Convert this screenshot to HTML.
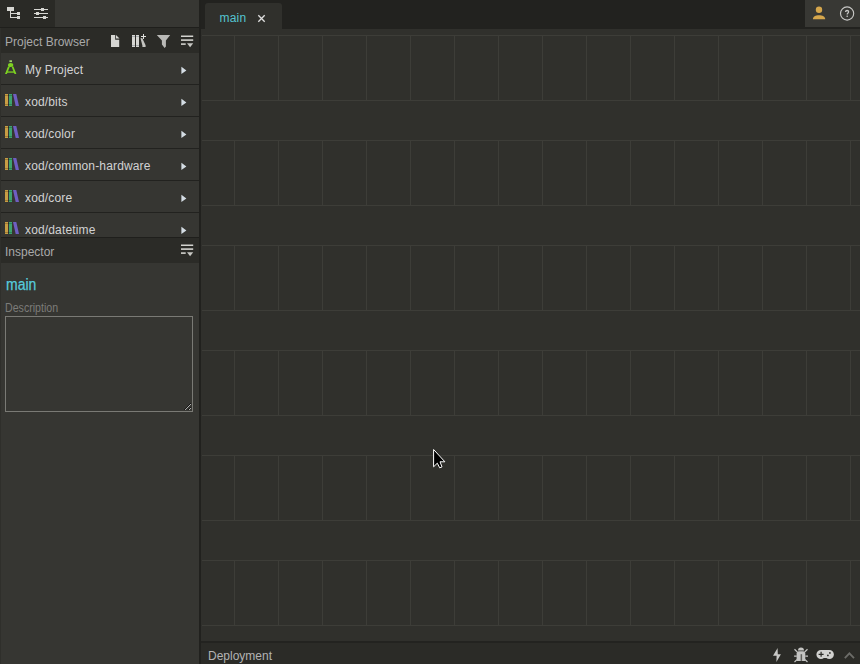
<!DOCTYPE html>
<html><head><meta charset="utf-8">
<style>
*{box-sizing:border-box;margin:0;padding:0}
html,body{width:860px;height:664px;overflow:hidden;background:#31312d;font-family:"Liberation Sans",sans-serif}
.abs{position:absolute}
#side{position:absolute;left:0;top:0;width:199px;height:664px;background:#363632}
#border{position:absolute;left:199px;top:0;width:2px;height:664px;background:#21211e}
#tb{position:absolute;left:0;top:0;width:199px;height:27px;background:#373733}
#tb .btn{position:absolute;top:0;height:27px;background:#2a2a26}
.sep{position:absolute;left:0;width:199px;height:1px;background:#1f1f1c}
.hdr{position:absolute;left:0;width:199px;height:25px;background:#2b2b27;color:#a9a9a9;font-size:12px}
.hdr span{position:absolute;left:5px;top:7px}
.row{position:absolute;left:0;width:199px;height:32px;background:#363632;border-bottom:1px solid #22221f;color:#d2d2d2;font-size:12px}
.row .t{position:absolute;left:25px;top:10px;letter-spacing:0.15px}
.row .arr{position:absolute;left:181px;top:14px;width:0;height:0;border-left:5px solid #d4dde4;border-top:3.5px solid transparent;border-bottom:3.5px solid transparent}
.row svg.lib{position:absolute;left:0;top:0}
#canvas{position:absolute;left:201px;top:29px;width:659px;height:612px;background:#30302c;overflow:hidden}
#topbar{position:absolute;left:201px;top:0;width:659px;height:27px;background:#22221f}
#topsep{position:absolute;left:201px;top:27px;width:659px;height:2px;background:#22221f}
#tab{position:absolute;left:205px;top:3px;width:77px;height:26px;background:#30302c;border-radius:3px 3px 0 0}
#right{position:absolute;left:805px;top:0;width:55px;height:27px;background:#383834}
#bot{position:absolute;left:201px;top:641px;width:659px;height:2px;background:#232320}
#dep{position:absolute;left:201px;top:643px;width:659px;height:21px;background:#2b2b27;color:#b3b3b3;font-size:12px}
.hl{position:absolute;left:1px;width:658px;height:1px;background:#3d3d38}
.vl{position:absolute;width:1px;background:#3d3d38}
.cond{display:inline-block;transform-origin:0 0;white-space:nowrap}
</style></head><body>
<div id="side"></div>
<div id="tb">
  <div class="btn" style="left:0;width:27px"></div>
  <div class="btn" style="left:27px;width:28px"></div>
  <svg class="abs" style="left:0;top:0" width="55" height="27" viewBox="0 0 55 27">
    <g fill="#d6d6d2">
      <rect x="7" y="7" width="7" height="4"/>
      <rect x="10" y="11" width="1" height="7"/>
      <rect x="10" y="13" width="8" height="1"/>
      <rect x="10" y="17" width="8" height="1"/>
      <rect x="17" y="12" width="3" height="3"/>
      <rect x="17" y="16" width="3" height="3"/>
      <rect x="34" y="9" width="14" height="1"/>
      <rect x="34" y="13" width="14" height="1"/>
      <rect x="34" y="17" width="14" height="1"/>
      <rect x="41" y="8" width="3" height="3"/>
      <rect x="36" y="12" width="3" height="3"/>
      <rect x="43" y="16" width="3" height="3"/>
    </g>
  </svg>
</div>
<div class="sep" style="top:27px"></div>
<div class="hdr" style="top:28px"><span>Project Browser</span>
  <svg class="abs" style="left:100px;top:0" width="99" height="25" viewBox="0 -1 99 25">
    <path d="M11 6H15.2V10.8H19.2V18H11Z" fill="#d6d6d2"/>
    <path d="M16 6V9.5H19.5Z" fill="#d6d6d2"/>
    <rect x="32" y="6" width="3" height="12" fill="#d6d6d2"/>
    <rect x="36" y="6" width="3" height="12" fill="#d6d6d2"/>
    <rect x="32" y="7.1" width="3" height="0.6" fill="#8a9098"/>
    <rect x="36" y="7.1" width="3" height="0.6" fill="#8a9098"/>
    <rect x="32" y="16.2" width="3" height="0.6" fill="#8a9098"/>
    <rect x="36" y="16.2" width="3" height="0.6" fill="#8a9098"/>
    <path d="M40.5 9.2L42.2 9L45.6 16.2V18H42.4V16.6Z" fill="#c4c4c0"/>
    <rect x="41" y="7" width="5" height="1" fill="#e0e0dc"/>
    <rect x="43" y="5" width="1" height="5" fill="#e0e0dc"/>
    <path d="M56.8 6H70.2L65.9 11.4V17.5L64.6 19.1L61.9 15.5V11.4Z" fill="#b9b9b6"/>
    <rect x="81" y="6.5" width="12.2" height="1.5" fill="#d2d2ce"/>
    <rect x="81" y="10.3" width="12.2" height="1.6" fill="#d2d2ce"/>
    <rect x="81" y="14.3" width="4.7" height="1.6" fill="#d2d2ce"/>
    <path d="M87 14.2H93.2L90.1 18.2Z" fill="#c8c8c4"/>
  </svg>
</div>
<div class="row" style="top:53px;"><svg class="lib" width="24" height="32" viewBox="0 0 24 32">
    <rect x="9.4" y="7.3" width="2.6" height="1.8" fill="#a0d468"/>
    <ellipse cx="10.7" cy="12" rx="2.7" ry="2.1" fill="#7ed321"/>
    <path d="M8 13.6H9.9L6.9 21H5Z" fill="#7ed321"/>
    <path d="M11.5 13.6H13.4L16.4 21H14.5Z" fill="#7ed321"/>
    <rect x="6.8" y="18.4" width="7.8" height="1.3" fill="#7ed321"/>
  </svg><span class="t">My Project</span><svg class="lib" width="199" height="32" viewBox="0 0 199 32"><path d="M181.4 13.8L186.4 17.4L181.4 21Z" fill="#d4dde4"/></svg></div>
<div class="row" style="top:85px;"><svg class="lib" width="24" height="32" viewBox="0 0 24 32"><rect x="5" y="9" width="3" height="12" fill="#c99d44"/><rect x="9" y="9" width="3" height="12" fill="#3ea36e"/><path d="M13 9H16.3L19 21H15.7Z" fill="#6f5ec2"/><g fill="#000" opacity="0.3"><rect x="5" y="10.3" width="7" height="0.7"/><rect x="5" y="19" width="7" height="0.7"/></g></svg><span class="t">xod/bits</span><svg class="lib" width="199" height="32" viewBox="0 0 199 32"><path d="M181.4 13.8L186.4 17.4L181.4 21Z" fill="#d4dde4"/></svg></div>
<div class="row" style="top:117px;"><svg class="lib" width="24" height="32" viewBox="0 0 24 32"><rect x="5" y="9" width="3" height="12" fill="#c99d44"/><rect x="9" y="9" width="3" height="12" fill="#3ea36e"/><path d="M13 9H16.3L19 21H15.7Z" fill="#6f5ec2"/><g fill="#000" opacity="0.3"><rect x="5" y="10.3" width="7" height="0.7"/><rect x="5" y="19" width="7" height="0.7"/></g></svg><span class="t">xod/color</span><svg class="lib" width="199" height="32" viewBox="0 0 199 32"><path d="M181.4 13.8L186.4 17.4L181.4 21Z" fill="#d4dde4"/></svg></div>
<div class="row" style="top:149px;"><svg class="lib" width="24" height="32" viewBox="0 0 24 32"><rect x="5" y="9" width="3" height="12" fill="#c99d44"/><rect x="9" y="9" width="3" height="12" fill="#3ea36e"/><path d="M13 9H16.3L19 21H15.7Z" fill="#6f5ec2"/><g fill="#000" opacity="0.3"><rect x="5" y="10.3" width="7" height="0.7"/><rect x="5" y="19" width="7" height="0.7"/></g></svg><span class="t">xod/common-hardware</span><svg class="lib" width="199" height="32" viewBox="0 0 199 32"><path d="M181.4 13.8L186.4 17.4L181.4 21Z" fill="#d4dde4"/></svg></div>
<div class="row" style="top:181px;"><svg class="lib" width="24" height="32" viewBox="0 0 24 32"><rect x="5" y="9" width="3" height="12" fill="#c99d44"/><rect x="9" y="9" width="3" height="12" fill="#3ea36e"/><path d="M13 9H16.3L19 21H15.7Z" fill="#6f5ec2"/><g fill="#000" opacity="0.3"><rect x="5" y="10.3" width="7" height="0.7"/><rect x="5" y="19" width="7" height="0.7"/></g></svg><span class="t">xod/core</span><svg class="lib" width="199" height="32" viewBox="0 0 199 32"><path d="M181.4 13.8L186.4 17.4L181.4 21Z" fill="#d4dde4"/></svg></div>
<div class="row" style="top:213px;height:24px;border-bottom:none;overflow:hidden;"><svg class="lib" width="24" height="32" viewBox="0 0 24 32"><rect x="5" y="9" width="3" height="12" fill="#c99d44"/><rect x="9" y="9" width="3" height="12" fill="#3ea36e"/><path d="M13 9H16.3L19 21H15.7Z" fill="#6f5ec2"/><g fill="#000" opacity="0.3"><rect x="5" y="10.3" width="7" height="0.7"/><rect x="5" y="19" width="7" height="0.7"/></g></svg><span class="t">xod/datetime</span><svg class="lib" width="199" height="32" viewBox="0 0 199 32"><path d="M181.4 13.8L186.4 17.4L181.4 21Z" fill="#d4dde4"/></svg></div>
<div class="sep" style="top:237px"></div>
<div class="hdr" style="top:238px"><span>Inspector</span>
  <svg class="abs" style="left:100px;top:0" width="99" height="25" viewBox="0 0 99 25">
    <rect x="81" y="6.5" width="12.2" height="1.5" fill="#d2d2ce"/>
    <rect x="81" y="10.3" width="12.2" height="1.6" fill="#d2d2ce"/>
    <rect x="81" y="14.3" width="4.7" height="1.6" fill="#d2d2ce"/>
    <path d="M87 14.2H93.2L90.1 18.2Z" fill="#c8c8c4"/>
  </svg>
</div>
<div class="abs" style="left:5.7px;top:276px;color:#56cbdc;font-size:16px;-webkit-text-stroke:0.25px #56cbdc"><span class="cond" style="transform:scaleX(0.875)">main</span></div>
<div class="abs" style="left:5.4px;top:301px;color:#7c7c79;font-size:12px"><span class="cond" style="transform:scaleX(0.885)">Description</span></div>
<textarea class="abs" style="left:5px;top:316px;width:188px;height:96px;border:1px solid #7a7a75;background:#363632;outline:none;font-family:'Liberation Sans',sans-serif"></textarea>
<div class="abs" style="left:0;top:28px;width:1px;height:636px;background:#2f2f2b"></div>

<div id="border"></div>
<div id="topbar"></div>
<div id="topsep"></div>
<div id="canvas"><div class="hl" style="top:6px"></div><div class="hl" style="top:71px"></div><div class="hl" style="top:111px"></div><div class="hl" style="top:176px"></div><div class="hl" style="top:216px"></div><div class="hl" style="top:281px"></div><div class="hl" style="top:321px"></div><div class="hl" style="top:386px"></div><div class="hl" style="top:426px"></div><div class="hl" style="top:491px"></div><div class="hl" style="top:531px"></div><div class="hl" style="top:596px"></div><div class="vl" style="left:33px;top:7px;height:64px"></div><div class="vl" style="left:77px;top:7px;height:64px"></div><div class="vl" style="left:121px;top:7px;height:64px"></div><div class="vl" style="left:165px;top:7px;height:64px"></div><div class="vl" style="left:209px;top:7px;height:64px"></div><div class="vl" style="left:253px;top:7px;height:64px"></div><div class="vl" style="left:297px;top:7px;height:64px"></div><div class="vl" style="left:341px;top:7px;height:64px"></div><div class="vl" style="left:385px;top:7px;height:64px"></div><div class="vl" style="left:429px;top:7px;height:64px"></div><div class="vl" style="left:473px;top:7px;height:64px"></div><div class="vl" style="left:517px;top:7px;height:64px"></div><div class="vl" style="left:561px;top:7px;height:64px"></div><div class="vl" style="left:605px;top:7px;height:64px"></div><div class="vl" style="left:649px;top:7px;height:64px"></div><div class="vl" style="left:33px;top:112px;height:64px"></div><div class="vl" style="left:77px;top:112px;height:64px"></div><div class="vl" style="left:121px;top:112px;height:64px"></div><div class="vl" style="left:165px;top:112px;height:64px"></div><div class="vl" style="left:209px;top:112px;height:64px"></div><div class="vl" style="left:253px;top:112px;height:64px"></div><div class="vl" style="left:297px;top:112px;height:64px"></div><div class="vl" style="left:341px;top:112px;height:64px"></div><div class="vl" style="left:385px;top:112px;height:64px"></div><div class="vl" style="left:429px;top:112px;height:64px"></div><div class="vl" style="left:473px;top:112px;height:64px"></div><div class="vl" style="left:517px;top:112px;height:64px"></div><div class="vl" style="left:561px;top:112px;height:64px"></div><div class="vl" style="left:605px;top:112px;height:64px"></div><div class="vl" style="left:649px;top:112px;height:64px"></div><div class="vl" style="left:33px;top:217px;height:64px"></div><div class="vl" style="left:77px;top:217px;height:64px"></div><div class="vl" style="left:121px;top:217px;height:64px"></div><div class="vl" style="left:165px;top:217px;height:64px"></div><div class="vl" style="left:209px;top:217px;height:64px"></div><div class="vl" style="left:253px;top:217px;height:64px"></div><div class="vl" style="left:297px;top:217px;height:64px"></div><div class="vl" style="left:341px;top:217px;height:64px"></div><div class="vl" style="left:385px;top:217px;height:64px"></div><div class="vl" style="left:429px;top:217px;height:64px"></div><div class="vl" style="left:473px;top:217px;height:64px"></div><div class="vl" style="left:517px;top:217px;height:64px"></div><div class="vl" style="left:561px;top:217px;height:64px"></div><div class="vl" style="left:605px;top:217px;height:64px"></div><div class="vl" style="left:649px;top:217px;height:64px"></div><div class="vl" style="left:33px;top:322px;height:64px"></div><div class="vl" style="left:77px;top:322px;height:64px"></div><div class="vl" style="left:121px;top:322px;height:64px"></div><div class="vl" style="left:165px;top:322px;height:64px"></div><div class="vl" style="left:209px;top:322px;height:64px"></div><div class="vl" style="left:253px;top:322px;height:64px"></div><div class="vl" style="left:297px;top:322px;height:64px"></div><div class="vl" style="left:341px;top:322px;height:64px"></div><div class="vl" style="left:385px;top:322px;height:64px"></div><div class="vl" style="left:429px;top:322px;height:64px"></div><div class="vl" style="left:473px;top:322px;height:64px"></div><div class="vl" style="left:517px;top:322px;height:64px"></div><div class="vl" style="left:561px;top:322px;height:64px"></div><div class="vl" style="left:605px;top:322px;height:64px"></div><div class="vl" style="left:649px;top:322px;height:64px"></div><div class="vl" style="left:33px;top:427px;height:64px"></div><div class="vl" style="left:77px;top:427px;height:64px"></div><div class="vl" style="left:121px;top:427px;height:64px"></div><div class="vl" style="left:165px;top:427px;height:64px"></div><div class="vl" style="left:209px;top:427px;height:64px"></div><div class="vl" style="left:253px;top:427px;height:64px"></div><div class="vl" style="left:297px;top:427px;height:64px"></div><div class="vl" style="left:341px;top:427px;height:64px"></div><div class="vl" style="left:385px;top:427px;height:64px"></div><div class="vl" style="left:429px;top:427px;height:64px"></div><div class="vl" style="left:473px;top:427px;height:64px"></div><div class="vl" style="left:517px;top:427px;height:64px"></div><div class="vl" style="left:561px;top:427px;height:64px"></div><div class="vl" style="left:605px;top:427px;height:64px"></div><div class="vl" style="left:649px;top:427px;height:64px"></div><div class="vl" style="left:33px;top:532px;height:64px"></div><div class="vl" style="left:77px;top:532px;height:64px"></div><div class="vl" style="left:121px;top:532px;height:64px"></div><div class="vl" style="left:165px;top:532px;height:64px"></div><div class="vl" style="left:209px;top:532px;height:64px"></div><div class="vl" style="left:253px;top:532px;height:64px"></div><div class="vl" style="left:297px;top:532px;height:64px"></div><div class="vl" style="left:341px;top:532px;height:64px"></div><div class="vl" style="left:385px;top:532px;height:64px"></div><div class="vl" style="left:429px;top:532px;height:64px"></div><div class="vl" style="left:473px;top:532px;height:64px"></div><div class="vl" style="left:517px;top:532px;height:64px"></div><div class="vl" style="left:561px;top:532px;height:64px"></div><div class="vl" style="left:605px;top:532px;height:64px"></div><div class="vl" style="left:649px;top:532px;height:64px"></div></div>
<div id="tab"></div>
<div class="abs" style="left:219.5px;top:11px;color:#55c4d0;font-size:12px;letter-spacing:0.2px">main</div>
<div id="bot"></div>
<div id="dep"><span class="abs" style="left:7px;top:6px">Deployment</span></div>
<svg class="abs" style="left:255px;top:12px" width="14" height="14" viewBox="0 0 14 14"><path d="M3.3 3.3L9.7 9.7M9.7 3.3L3.3 9.7" stroke="#dedede" stroke-width="1.35"/></svg>
<div id="right"></div>
<svg class="abs" style="left:805px;top:0" width="55" height="27" viewBox="805 0 55 27">
  <circle cx="819" cy="9.8" r="3.2" fill="#d5a64c"/>
  <path d="M812.9 19.2C812.9 16.6 815.5 15.2 819 15.2C822.5 15.2 825.2 16.6 825.2 19.2Z" fill="#d5a64c"/>
  <circle cx="847.1" cy="13.5" r="6.6" fill="none" stroke="#c8c8c6" stroke-width="1.15"/>
  <path d="M845.5 12Q845.7 10.5 847.1 10.5Q848.6 10.5 848.6 11.8Q848.6 12.7 847.8 13.2Q847.2 13.6 847.2 14.6" fill="none" stroke="#c8c8c6" stroke-width="1.3"/><rect x="846.5" y="15.6" width="1.4" height="1.3" fill="#c8c8c6"/>
</svg>
<svg class="abs" style="left:760px;top:643px" width="100" height="21" viewBox="760 643 100 21">
  <path d="M777.6 648L773 655.8H776.6L776.4 662L780.9 654.2H777.8Z" fill="#c8c8c6"/>
  <path d="M798 650.6A3 3 0 0 1 804 650.6Z" fill="#c4c4c2"/>
  <path d="M796.6 660.9V653.5Q796.6 651.2 799 651.2H803Q805.3 651.2 805.3 653.5V660.9Z" fill="#c4c4c2"/>
  <rect x="800.6" y="654.2" width="1.5" height="6.7" fill="#5e5e5a"/>
  <g stroke="#c4c4c2" stroke-width="1.2">
    <path d="M794.5 649.3L797.3 652M807.5 649.3L804.7 652M794.1 656.1H796.8M805.3 656.1H808M794.5 662L797.3 659.4M807.5 662L804.7 659.4"/>
  </g>
  <path d="M821 649.9H829.3A4.5 4.5 0 0 1 829.3 659.1Q827.5 659.1 826.5 658H823.8Q822.8 659.1 821 659.1A4.5 4.5 0 0 1 821 649.9Z" fill="#d2d2d0"/>
  <path d="M818.6 654.3H823.6M821.1 651.8V656.8" stroke="#2b2b27" stroke-width="1.2"/>
  <circle cx="829.9" cy="652.9" r="0.9" fill="#2b2b27"/>
  <circle cx="827.9" cy="655.4" r="0.9" fill="#2b2b27"/>
  <path d="M844.8 658.2L849.4 653.4L854 658.2" fill="none" stroke="#6c6c68" stroke-width="1.8"/>
</svg>
<svg class="abs" style="left:428px;top:444px" width="20" height="26" viewBox="428 444 20 26">
  <path d="M433.6 449.5V466.8L437.3 463.2L439.7 467.8L442 466.9L440 461.8H444.9Z" fill="#000" stroke="#fff" stroke-width="1"/>
</svg>
</body></html>
